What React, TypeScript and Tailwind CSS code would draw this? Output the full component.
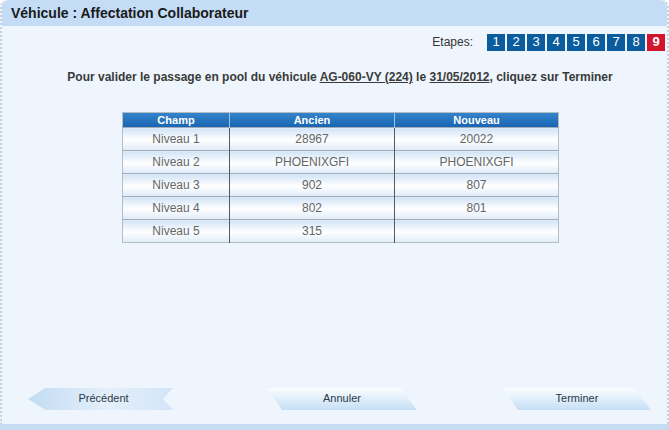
import React from "react";

const rows = [
  ["Niveau 1", "28967", "20022"],
  ["Niveau 2", "PHOENIXGFI", "PHOENIXGFI"],
  ["Niveau 3", "902", "807"],
  ["Niveau 4", "802", "801"],
  ["Niveau 5", "315", ""],
];

export default function App() {
  return (
    <div className="w-[669px] h-[430px] overflow-hidden bg-white flex flex-col font-['Liberation_Sans',Arial,sans-serif]">
      <div className="flex-1 flex flex-col bg-[#eef5fc] rounded-t-[7px] border-l-2 border-r-2 border-dotted border-[#c9d3dc]">
        <div className="h-[26px] shrink-0 bg-[#c4dcf5] rounded-t-[7px] flex items-center pl-[9px] text-[14px] font-bold text-[#1a1a1a]">
          Véhicule : Affectation Collaborateur
        </div>
        <div className="flex justify-end items-center pt-[7px] pr-[2px]">
          <span className="text-[12px] text-[#333] mr-[14px]">Etapes:</span>
          <div className="flex gap-[2px]">
            {[1, 2, 3, 4, 5, 6, 7, 8, 9].map((n) => (
              <div
                key={n}
                className={
                  n === 9
                    ? "w-[18px] h-[17px] bg-[#d4142a] text-white text-[13px] font-bold flex items-center justify-center"
                    : "w-[18px] h-[17px] bg-[#0b5c9c] text-white text-[13px] flex items-center justify-center"
                }
              >
                {n}
              </div>
            ))}
          </div>
        </div>
        <div className="pl-[11px] mt-[17px] text-center text-[12px] font-bold text-[#3a3a3a]">
          Pour valider le passage en pool du véhicule <span className="underline">AG-060-VY (224)</span> le{" "}
          <span className="underline">31/05/2012</span>, cliquez sur Terminer
        </div>
        <div className="pl-[120px] mt-[26px]">
          <table className="w-[437px] border-collapse border border-[#b4bcc4] text-[12px]">
            <thead>
              <tr className="h-[15px] bg-[linear-gradient(#3583cb,#1763b0)] text-white text-[11px] font-bold">
                <th className="w-[107px] p-0 leading-[14px] border-r border-[#9fc3e6]">Champ</th>
                <th className="w-[165px] p-0 leading-[14px] border-r border-[#9fc3e6]">Ancien</th>
                <th className="p-0 leading-[14px]">Nouveau</th>
              </tr>
            </thead>
            <tbody>
              {rows.map((r) => (
                <tr
                  key={r[0]}
                  className="h-[23px] bg-[linear-gradient(#d3e5f6,#ffffff_50%,#dceaf8)] text-[#666] border-t border-[#a3acb5]"
                >
                  <td className="p-0 text-center border-r border-[#5a5a5a]">{r[0]}</td>
                  <td className="p-0 text-center border-r border-[#5a5a5a]">{r[1]}</td>
                  <td className="p-0 text-center">{r[2]}</td>
                </tr>
              ))}
            </tbody>
          </table>
        </div>
        <div className="flex-1" />
        <div className="flex items-center h-[22px] mb-[14px] text-[11px] text-[#2b3a4a]">
          <div className="ml-[26px] w-[145px] h-[22px] flex items-center justify-center pl-[6px] pb-[2px] bg-[linear-gradient(90deg,#c2dcf3,#e4effa_55%,#d2e5f7)] [clip-path:polygon(0_50%,12%_0,100%_0,93%_50%,100%_100%,12%_100%)]">
            Précédent
          </div>
          <div className="ml-[94px] w-[150px] h-[22px] flex items-center justify-center pb-[2px] bg-[linear-gradient(#fbfdff,#c6dff5)] [clip-path:polygon(0_0,89%_0,100%_100%,10%_100%)]">
            Annuler
          </div>
          <div className="ml-[86px] w-[148px] h-[22px] flex items-center justify-center pb-[2px] bg-[linear-gradient(#fbfdff,#c6dff5)] [clip-path:polygon(0_0,89%_0,100%_100%,10%_100%)]">
            Terminer
          </div>
        </div>
      </div>
      <div className="h-[6px] shrink-0 bg-[#c6dcf2]" />
    </div>
  );
}
